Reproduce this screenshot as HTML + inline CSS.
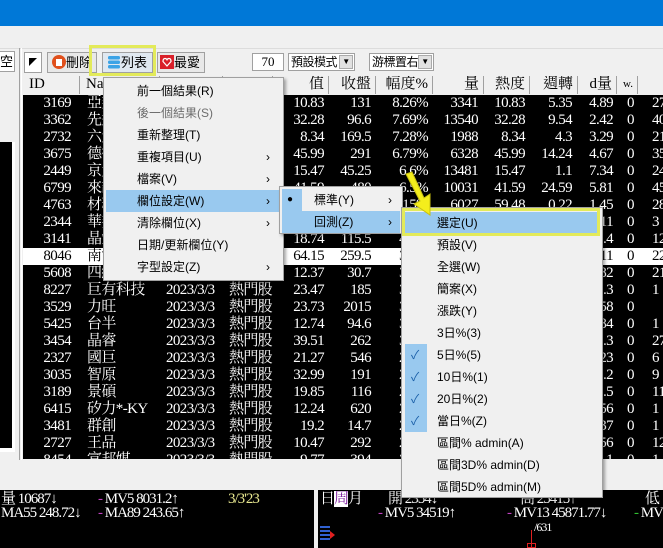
<!DOCTYPE html>
<html><head><meta charset="utf-8"><style>
*{margin:0;padding:0;box-sizing:border-box}
body{width:663px;height:548px;overflow:hidden;background:#f0f0f0;position:relative;font-family:"Liberation Serif","Noto Serif CJK SC",serif}
.a{position:absolute}
.tb{position:absolute;top:0;left:0;width:663px;height:26px;background:#0078d7}
.btn{position:absolute;top:52px;height:21px;border:1px solid #a0a0a0;background:#e8e8e8;font:13px "Liberation Sans","Noto Sans CJK TC",sans-serif;line-height:19px;white-space:nowrap;overflow:hidden}
.hd{position:absolute;top:76px;height:18px;left:23px;width:640px;background:#f0f0f0;font:15px "Liberation Serif","Noto Serif CJK TC",serif;line-height:17px;overflow:hidden}
.hd span{position:absolute;top:0;text-align:right;border-right:1px solid #a0a0a0;padding-right:4px;height:18px;white-space:nowrap}
.grid{position:absolute;left:23px;top:95px;width:640px;height:364px;background:#000;overflow:hidden;color:#fff;font:15px "Liberation Serif","Noto Serif CJK TC",serif;letter-spacing:-0.6px}
.r{position:absolute;left:0;width:640px;height:17px;line-height:17px}
.r span{position:absolute;white-space:nowrap}
.sel{background:#fff;color:#000}
.i{left:0;width:48px;text-align:right}
.n{left:64px}.dt{left:143px}.ct{left:206px}
.v{left:250px;width:51px;text-align:right}
.c{left:307px;width:41px;text-align:right}
.f{left:354px;width:51px;text-align:right}
.q{left:411px;width:44px;text-align:right}
.h{left:462px;width:40px;text-align:right}
.w{left:508px;width:41px;text-align:right}
.d{left:555px;width:35px;text-align:right}
.z{left:604px}.l{left:629px}
.menu{position:absolute;background:#f0f0f0;border:1px solid #a0a0a0;box-shadow:2px 2px 3px rgba(0,0,0,.35);font:12px "Liberation Sans","Noto Sans CJK TC",sans-serif;color:#000}
.mi{position:absolute;left:0;right:0;height:22px;line-height:22px;white-space:nowrap}
.mi .t{position:absolute}
.mi .ar{position:absolute;font-size:12px}
.hl{background:#99c9ef}
.bt{font:15px "Liberation Serif","Noto Serif CJK TC",serif;color:#fff;letter-spacing:-1px;white-space:nowrap;line-height:16px}
</style></head><body>
<div class="tb"></div>
<div class="a" style="left:0;top:48px;width:663px;height:1px;background:#dcdcdc"></div>
<div class="btn" style="left:-2px;width:17px;top:51px;background:#fff;padding-left:1px">空</div>
<div class="a" style="left:19px;top:48px;width:1px;height:412px;background:#a0a0a0"></div>
<div class="a" style="left:21px;top:48px;width:1px;height:412px;background:#fff"></div>
<div class="a" style="left:0;top:142px;width:12px;height:306px;background:#000"></div>
<div class="a" style="left:12px;top:142px;width:3px;height:310px;background:#fff"></div>
<div class="a" style="left:0;top:448px;width:15px;height:4px;background:#fff"></div>
<div class="btn" style="left:24px;width:18px;background:#fff"><svg width="16" height="19"><polygon points="4,5 12,5 4,13" fill="#000"/></svg></div>
<div class="btn" style="left:47px;width:50px;padding-left:4px"><svg width="14" height="14" style="vertical-align:-2px"><circle cx="7" cy="7" r="7" fill="#e0501c"/><rect x="4" y="4" width="6" height="7" fill="#fff"/></svg>刪除</div>
<div class="btn" style="left:102px;width:51px;padding-left:4px;background:#e0e8f0"><svg width="14" height="14" style="vertical-align:-2px"><rect x="1" y="1" width="12" height="3.5" rx="1.5" fill="#3ba3e6"/><rect x="1" y="5.5" width="12" height="3.5" rx="1.5" fill="#3ba3e6"/><rect x="1" y="10" width="12" height="3.5" rx="1.5" fill="#3ba3e6"/></svg>列表</div>
<div class="a" style="left:89px;top:45px;width:67px;height:31px;border:3px solid #e3ea5a"></div>
<div class="btn" style="left:157px;width:48px;padding-left:2px"><svg width="14" height="14" style="vertical-align:-2px"><rect width="14" height="14" fill="#d9202a"/><path d="M7 11L3 6.5Q3 3.5 5 3.5T7 5.5Q7 3.5 9 3.5T11 6.5Z" fill="none" stroke="#fff" stroke-width="1.2"/></svg>最愛</div>
<div class="btn" style="left:252px;top:53px;width:32px;height:18px;line-height:16px;background:#fff;text-align:center;font-family:'Liberation Serif',serif">70</div>
<div class="btn" style="left:288px;top:53px;width:67px;height:18px;line-height:16px;background:#fff;padding-left:2px;font-size:12px;letter-spacing:-0.5px">預設模式<span class="a" style="right:1px;top:1px;width:14px;height:14px;background:#e1e1e1;border:1px solid #aaa;font-size:8px;line-height:12px;text-align:center">▼</span></div>
<div class="btn" style="left:369px;top:53px;width:65px;height:18px;line-height:16px;background:#fff;padding-left:2px;font-size:12px;letter-spacing:-0.5px">游標置右<span class="a" style="right:1px;top:1px;width:14px;height:14px;background:#e1e1e1;border:1px solid #aaa;font-size:8px;line-height:12px;text-align:center">▼</span></div>
<div class="hd">
<span style="left:0;width:57px;text-align:left;padding-left:6px">ID</span>
<span style="left:57px;width:80px;text-align:left;padding-left:6px">Name</span>
<span style="left:137px;width:63px"></span>
<span style="left:200px;width:50px"></span>
<span style="left:250px;width:56px">值</span>
<span style="left:306px;width:47px">收盤</span>
<span style="left:353px;width:57px">幅度%</span>
<span style="left:410px;width:51px">量</span>
<span style="left:461px;width:46px">熱度</span>
<span style="left:507px;width:48px">週轉</span>
<span style="left:555px;width:39px">d量</span>
<span style="left:594px;width:21px;font-size:11px">w.</span>
</div>
<div class="grid">
<div class="r" style="top:0"><span class="i">3169</span><span class="n">亞翔</span><span class="dt">2023/3/3</span><span class="ct">熱門股</span><span class="v">10.83</span><span class="c">131</span><span class="f">8.26%</span><span class="q">3341</span><span class="h">10.83</span><span class="w">5.35</span><span class="d">4.89</span><span class="z">0</span><span class="l">27</span></div>
<div class="r" style="top:17px"><span class="i">3362</span><span class="n">先進光</span><span class="dt">2023/3/3</span><span class="ct">熱門股</span><span class="v">32.28</span><span class="c">96.6</span><span class="f">7.69%</span><span class="q">13540</span><span class="h">32.28</span><span class="w">9.54</span><span class="d">2.42</span><span class="z">0</span><span class="l">40</span></div>
<div class="r" style="top:34px"><span class="i">2732</span><span class="n">六角</span><span class="dt">2023/3/3</span><span class="ct">熱門股</span><span class="v">8.34</span><span class="c">169.5</span><span class="f">7.28%</span><span class="q">1988</span><span class="h">8.34</span><span class="w">4.3</span><span class="d">3.29</span><span class="z">0</span><span class="l">21</span></div>
<div class="r" style="top:51px"><span class="i">3675</span><span class="n">德微</span><span class="dt">2023/3/3</span><span class="ct">熱門股</span><span class="v">45.99</span><span class="c">291</span><span class="f">6.79%</span><span class="q">6328</span><span class="h">45.99</span><span class="w">14.24</span><span class="d">4.67</span><span class="z">0</span><span class="l">35</span></div>
<div class="r" style="top:68px"><span class="i">2449</span><span class="n">京元電</span><span class="dt">2023/3/3</span><span class="ct">熱門股</span><span class="v">15.47</span><span class="c">45.25</span><span class="f">6.6%</span><span class="q">13481</span><span class="h">15.47</span><span class="w">1.1</span><span class="d">7.34</span><span class="z">0</span><span class="l">24</span></div>
<div class="r" style="top:85px"><span class="i">6799</span><span class="n">來頡</span><span class="dt">2023/3/3</span><span class="ct">熱門股</span><span class="v">41.59</span><span class="c">480</span><span class="f">6.5%</span><span class="q">10031</span><span class="h">41.59</span><span class="w">24.59</span><span class="d">5.81</span><span class="z">0</span><span class="l">45</span></div>
<div class="r" style="top:102px"><span class="i">4763</span><span class="n">材料</span><span class="dt">2023/3/3</span><span class="ct">熱門股</span><span class="v">59.48</span><span class="c">715</span><span class="f">5.15%</span><span class="q">6027</span><span class="h">59.48</span><span class="w">0.22</span><span class="d">1.45</span><span class="z">0</span><span class="l">28</span></div>
<div class="r" style="top:119px"><span class="i">2344</span><span class="n">華邦電</span><span class="dt">2023/3/3</span><span class="ct">熱門股</span><span class="v">20.11</span><span class="c">22.1</span><span class="f">4.5%</span><span class="q">9011</span><span class="h">20.11</span><span class="w">1.2</span><span class="d">3.11</span><span class="z">0</span><span class="l">3</span></div>
<div class="r" style="top:136px"><span class="i">3141</span><span class="n">晶宏</span><span class="dt">2023/3/3</span><span class="ct">熱門股</span><span class="v">18.74</span><span class="c">115.5</span><span class="f">4.1%</span><span class="q">1874</span><span class="h">18.74</span><span class="w">2.1</span><span class="d">2.4</span><span class="z">0</span><span class="l">12</span></div>
<div class="r sel" style="top:153px"><span class="i">8046</span><span class="n">南電</span><span class="dt">2023/3/3</span><span class="ct">熱門股</span><span class="v">64.15</span><span class="c">259.5</span><span class="f">3.8%</span><span class="q">6415</span><span class="h">64.15</span><span class="w">1.5</span><span class="d">2.11</span><span class="z">0</span><span class="l">22</span></div>
<div class="r" style="top:170px"><span class="i">5608</span><span class="n">四維航</span><span class="dt">2023/3/3</span><span class="ct">熱門股</span><span class="v">12.37</span><span class="c">30.7</span><span class="f">3.7%</span><span class="q">1237</span><span class="h">12.37</span><span class="w">1.1</span><span class="d">1.82</span><span class="z">0</span><span class="l">21</span></div>
<div class="r" style="top:187px"><span class="i">8227</span><span class="n">巨有科技</span><span class="dt">2023/3/3</span><span class="ct">熱門股</span><span class="v">23.47</span><span class="c">185</span><span class="f">3.6%</span><span class="q">2347</span><span class="h">23.47</span><span class="w">1.3</span><span class="d">1.3</span><span class="z">0</span><span class="l">1</span></div>
<div class="r" style="top:204px"><span class="i">3529</span><span class="n">力旺</span><span class="dt">2023/3/3</span><span class="ct">熱門股</span><span class="v">23.73</span><span class="c">2015</span><span class="f">3.5%</span><span class="q">2373</span><span class="h">23.73</span><span class="w">1.4</span><span class="d">2.58</span><span class="z">0</span><span class="l"></span></div>
<div class="r" style="top:221px"><span class="i">5425</span><span class="n">台半</span><span class="dt">2023/3/3</span><span class="ct">熱門股</span><span class="v">12.74</span><span class="c">94.6</span><span class="f">3.4%</span><span class="q">1274</span><span class="h">12.74</span><span class="w">1.2</span><span class="d">1.84</span><span class="z">0</span><span class="l">1</span></div>
<div class="r" style="top:238px"><span class="i">3454</span><span class="n">晶睿</span><span class="dt">2023/3/3</span><span class="ct">熱門股</span><span class="v">39.51</span><span class="c">262</span><span class="f">3.2%</span><span class="q">3951</span><span class="h">39.51</span><span class="w">2.3</span><span class="d">1.3</span><span class="z">0</span><span class="l">27</span></div>
<div class="r" style="top:255px"><span class="i">2327</span><span class="n">國巨</span><span class="dt">2023/3/3</span><span class="ct">熱門股</span><span class="v">21.27</span><span class="c">546</span><span class="f">2.9%</span><span class="q">2127</span><span class="h">21.27</span><span class="w">1.1</span><span class="d">1.23</span><span class="z">0</span><span class="l">6</span></div>
<div class="r" style="top:272px"><span class="i">3035</span><span class="n">智原</span><span class="dt">2023/3/3</span><span class="ct">熱門股</span><span class="v">32.99</span><span class="c">191</span><span class="f">2.8%</span><span class="q">3299</span><span class="h">32.99</span><span class="w">1.2</span><span class="d">1.2</span><span class="z">0</span><span class="l">9</span></div>
<div class="r" style="top:289px"><span class="i">3189</span><span class="n">景碩</span><span class="dt">2023/3/3</span><span class="ct">熱門股</span><span class="v">19.85</span><span class="c">116</span><span class="f">2.7%</span><span class="q">1985</span><span class="h">19.85</span><span class="w">1.5</span><span class="d">1.5</span><span class="z">0</span><span class="l">11</span></div>
<div class="r" style="top:306px"><span class="i">6415</span><span class="n">矽力*-KY</span><span class="dt">2023/3/3</span><span class="ct">熱門股</span><span class="v">12.24</span><span class="c">620</span><span class="f">2.6%</span><span class="q">1224</span><span class="h">12.24</span><span class="w">1.6</span><span class="d">1.56</span><span class="z">0</span><span class="l">1</span></div>
<div class="r" style="top:323px"><span class="i">3481</span><span class="n">群創</span><span class="dt">2023/3/3</span><span class="ct">熱門股</span><span class="v">19.2</span><span class="c">14.7</span><span class="f">2.5%</span><span class="q">1920</span><span class="h">19.2</span><span class="w">1.7</span><span class="d">1.37</span><span class="z">0</span><span class="l">1</span></div>
<div class="r" style="top:340px"><span class="i">2727</span><span class="n">王品</span><span class="dt">2023/3/3</span><span class="ct">熱門股</span><span class="v">10.47</span><span class="c">292</span><span class="f">2.4%</span><span class="q">1047</span><span class="h">10.47</span><span class="w">1.5</span><span class="d">1.56</span><span class="z">0</span><span class="l">12</span></div>
<div class="r" style="top:357px"><span class="i">8454</span><span class="n">富邦媒</span><span class="dt">2023/3/3</span><span class="ct">熱門股</span><span class="v">9.77</span><span class="c">394</span><span class="f">2.3%</span><span class="q">977</span><span class="h">9.77</span><span class="w">1.1</span><span class="d">1.1</span><span class="z">0</span><span class="l">1</span></div>
</div>
<div class="a" style="left:0;top:490px;width:314px;height:58px;background:#000"></div>
<div class="a" style="left:318px;top:490px;width:345px;height:58px;background:#000"></div>
<div class="a bt" style="left:1px;top:491px">量 10687↓</div>
<div class="a bt" style="left:1px;top:505px">MA55 248.72↓</div>
<div class="a bt" style="left:98px;top:491px"><span style="color:#c040c0">-</span> MV5 8031.2↑</div>
<div class="a bt" style="left:98px;top:505px"><span style="color:#c040c0">-</span> MA89 243.65↑</div>
<div class="a bt" style="left:228px;top:491px;color:#e8e890">3/3'23</div>
<div class="a bt" style="left:320px;top:491px">日<span style="background:#fff;color:#8020a0">周</span>月</div>
<div class="a bt" style="left:388px;top:491px">開 2354↓</div>
<div class="a bt" style="left:520px;top:491px">高 25415↑</div>
<div class="a bt" style="left:645px;top:491px">低</div>
<div class="a bt" style="left:378px;top:505px"><span style="color:#c040c0">-</span> MV5 34519↑</div>
<div class="a bt" style="left:507px;top:505px"><span style="color:#c040c0">-</span> MV13 45871.77↓</div>
<div class="a bt" style="left:634px;top:505px"><span style="color:#30c030">-</span> MV</div>
<svg class="a" style="left:320px;top:525px" width="16" height="16"><rect x="0" y="1" width="10" height="2" fill="#3060d0"/><rect x="0" y="5" width="10" height="2" fill="#3060d0"/><rect x="0" y="9" width="10" height="2" fill="#3060d0"/><rect x="0" y="13" width="10" height="2" fill="#3060d0"/><polygon points="10,6 15,10 10,14" fill="#e02020"/></svg>
<div class="a bt" style="left:534px;top:519px;font-size:12px">/631</div>
<div class="a" style="left:531px;top:530px;width:1px;height:18px;background:#e02020"></div>
<div class="a" style="left:527px;top:543px;width:9px;height:5px;border:1px solid #e02020"></div>
<div class="menu" style="left:103px;top:77px;width:181px;height:204px">
<div class="mi" style="top:2px"><span class="t" style="left:33px">前一個結果(R)</span></div>
<div class="mi" style="top:24px;color:#6d6d6d"><span class="t" style="left:33px">後一個結果(S)</span></div>
<div class="mi" style="top:46px"><span class="t" style="left:33px">重新整理(T)</span></div>
<div class="mi" style="top:68px"><span class="t" style="left:33px">重複項目(U)</span><span class="ar" style="left:162px">›</span></div>
<div class="mi" style="top:90px"><span class="t" style="left:33px">檔案(V)</span><span class="ar" style="left:162px">›</span></div>
<div class="mi hl" style="top:112px;left:2px;right:2px"><span class="t" style="left:31px">欄位設定(W)</span><span class="ar" style="left:160px">›</span></div>
<div class="mi" style="top:134px"><span class="t" style="left:33px">清除欄位(X)</span><span class="ar" style="left:162px">›</span></div>
<div class="mi" style="top:156px"><span class="t" style="left:33px">日期/更新欄位(Y)</span></div>
<div class="mi" style="top:178px"><span class="t" style="left:33px">字型設定(Z)</span><span class="ar" style="left:162px">›</span></div>
</div>
<div class="menu" style="left:279px;top:186px;width:124px;height:48px">
<div class="mi" style="top:2px;left:2px;right:2px"><span class="a" style="left:0;top:0;width:20px;height:22px;background:#99c9ef"></span><span class="t" style="left:5px;font-size:10px">●</span><span class="t" style="left:32px">標準(Y)</span><span class="ar" style="left:106px">›</span></div>
<div class="mi hl" style="top:24px;left:2px;right:2px"><span class="t" style="left:32px">回測(Z)</span><span class="ar" style="left:106px">›</span></div>
</div>
<div class="menu" style="left:401px;top:207px;width:202px;height:291px">
<div class="mi hl" style="top:4px;left:2px;right:2px"><span class="t" style="left:33px">選定(U)</span></div>
<div class="mi" style="top:26px"><span class="t" style="left:35px">預設(V)</span></div>
<div class="mi" style="top:48px"><span class="t" style="left:35px">全選(W)</span></div>
<div class="mi" style="top:70px"><span class="t" style="left:35px">簡案(X)</span></div>
<div class="mi" style="top:92px"><span class="t" style="left:35px">漲跌(Y)</span></div>
<div class="mi" style="top:114px"><span class="t" style="left:35px">3日%(3)</span></div>
<div class="a" style="left:3px;top:136px;width:22px;height:88px;background:#99c9ef"></div>
<div class="mi" style="top:136px"><span class="t" style="left:9px;color:#1a5fa8">✓</span><span class="t" style="left:35px">5日%(5)</span></div>
<div class="mi" style="top:158px"><span class="t" style="left:9px;color:#1a5fa8">✓</span><span class="t" style="left:35px">10日%(1)</span></div>
<div class="mi" style="top:180px"><span class="t" style="left:9px;color:#1a5fa8">✓</span><span class="t" style="left:35px">20日%(2)</span></div>
<div class="mi" style="top:202px"><span class="t" style="left:9px;color:#1a5fa8">✓</span><span class="t" style="left:35px">當日%(Z)</span></div>
<div class="mi" style="top:224px"><span class="t" style="left:35px">區間% admin(A)</span></div>
<div class="mi" style="top:246px"><span class="t" style="left:35px">區間3D% admin(D)</span></div>
<div class="mi" style="top:268px"><span class="t" style="left:35px">區間5D% admin(M)</span></div>
</div>
<div class="a" style="left:402px;top:208px;width:198px;height:28px;border:3px solid #e3ea5a"></div>
<svg class="a" style="left:398px;top:170px" width="40" height="50"><polygon points="8,4 14,2 26,28 32,24 32,45 16,34 22,31" fill="#f4ee1c" stroke="#c8c010" stroke-width="1"/></svg>
</body></html>
